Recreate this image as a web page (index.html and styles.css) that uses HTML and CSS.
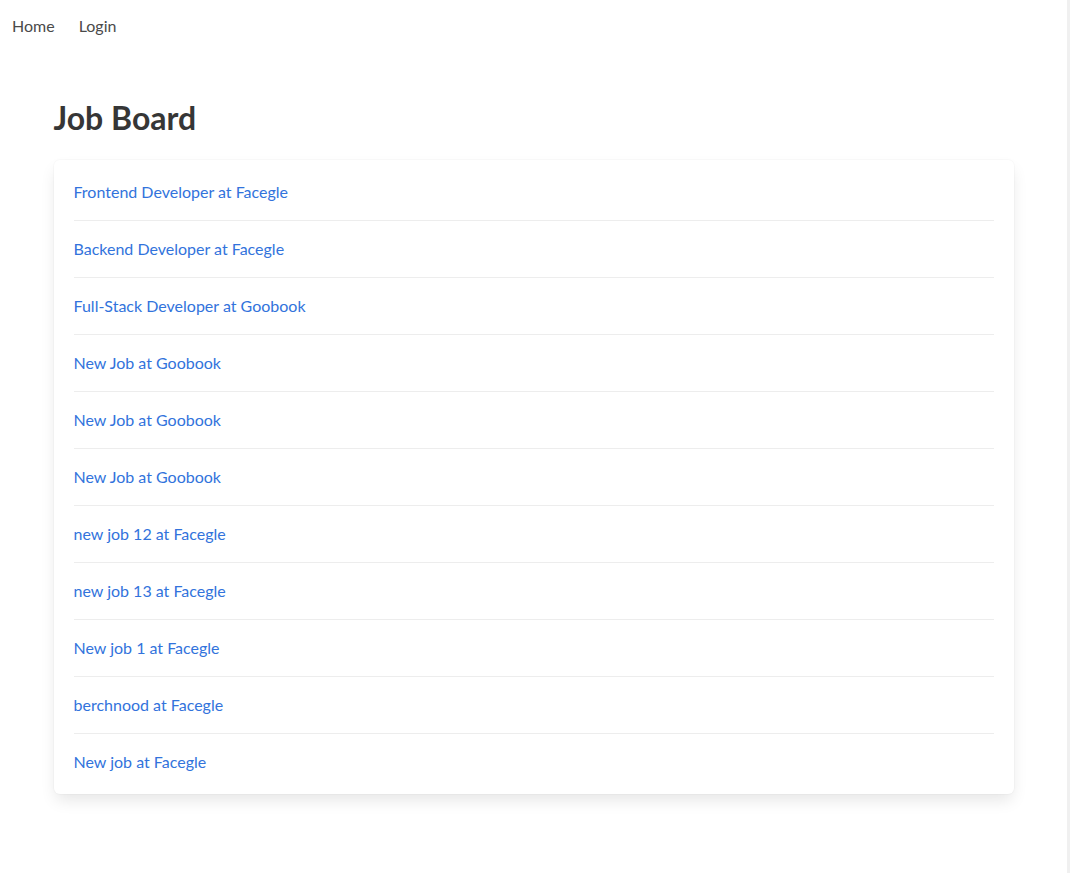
FILE: index.html
```html
<!DOCTYPE html>
<html lang="en">
<head>
<meta charset="utf-8">
<title>Job Board</title>
<link rel="stylesheet" href="styles.css">
</head>
<body>
<div class="page">
  <nav class="navbar">
    <a class="navbar-item" href="#">Home</a>
    <a class="navbar-item" href="#">Login</a>
  </nav>
  <section class="section">
    <div class="container">
      <h1 class="title">Job Board</h1>
      <div class="box">
        <div class="job"><a href="#">Frontend Developer at Facegle</a></div>
        <div class="job"><a href="#">Backend Developer at Facegle</a></div>
        <div class="job"><a href="#">Full-Stack Developer at Goobook</a></div>
        <div class="job"><a href="#">New Job at Goobook</a></div>
        <div class="job"><a href="#">New Job at Goobook</a></div>
        <div class="job"><a href="#">New Job at Goobook</a></div>
        <div class="job"><a href="#">new job 12 at Facegle</a></div>
        <div class="job"><a href="#">new job 13 at Facegle</a></div>
        <div class="job"><a href="#">New job 1 at Facegle</a></div>
        <div class="job"><a href="#">berchnood at Facegle</a></div>
        <div class="job"><a href="#">New job at Facegle</a></div>
      </div>
    </div>
  </section>
</div>
<div class="scroll-strip"></div>
</body>
</html>
```
FILE: styles.css
```css
html, body {
  margin: 0;
  padding: 0;
  background: #fff;
}
body {
  display: flex;
  min-height: 873px;
  font-family: Lato, "Noto Sans", sans-serif;
  font-size: 16px;
  line-height: 1.5;
  color: #4a4a4a;
}
.page {
  flex: 1;
}
.scroll-strip {
  width: 3px;
  background: #f0f0f0;
}
.navbar {
  display: flex;
  align-items: center;
  height: 52px;
}
.navbar-item {
  padding: 8px 12px;
  color: #4a4a4a;
  text-decoration: none;
}
.section {
  padding: 48px 24px;
}
.container {
  max-width: 960px;
  margin: 0 auto;
}
.title {
  margin: 0 0 24px;
  font-size: 32px;
  font-weight: 700;
  line-height: 1.125;
  color: #363636;
}
.box {
  background: #fff;
  border-radius: 6px;
  padding: 20px;
  box-shadow: 0 0.5em 1em -0.125em rgba(10, 10, 10, 0.1), 0 0 0 1px rgba(10, 10, 10, 0.02);
}
.job {
  line-height: 24px;
}
.job + .job {
  margin-top: 16px;
  padding-top: 16px;
  border-top: 1px solid rgba(219, 219, 219, 0.5);
}
.job a {
  color: #3273dc;
  text-decoration: none;
}
```
